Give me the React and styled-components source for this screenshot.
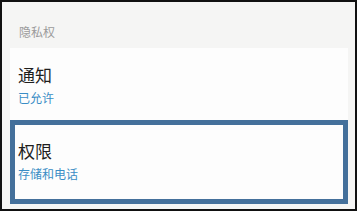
import React from "react";
import styled, { createGlobalStyle } from "styled-components";

const Global = createGlobalStyle`
  html, body { margin: 0; padding: 0; background: #ffffff; }
  * { box-sizing: border-box; }
  body { font-family: "Noto Sans CJK SC", "Noto Sans", sans-serif; }
`;

const Frame = styled.div`
  width: 357px;
  height: 211px;
  border: 2px solid #111;
  background: #f5f5f4;
  display: flex;
  flex-direction: column;
  overflow: hidden;
`;

const SectionHeader = styled.div`
  height: 46px;
  padding: 22px 0 0 17px;
  font-size: 12px;
  line-height: 16px;
  color: #9b9b9b;
`;

const Card = styled.div`
  margin: 0 7px 0 8px;
  background: #fdfdfd;
  display: flex;
  flex-direction: column;
`;

const Row = styled.div`
  height: ${(p) => p.$h}px;
  padding: ${(p) => (p.$focused ? "15px 3px 0" : "16px 8px 0")};
  border: ${(p) => (p.$focused ? "5px solid #44709b" : "none")};
  display: flex;
  flex-direction: column;
  gap: 4px;
`;

const Title = styled.div`
  font-size: 17px;
  line-height: 22px;
  color: #1e1e1e;
`;

const Sub = styled.div`
  font-size: 12px;
  line-height: 16px;
  color: #3a8dc5;
`;

export default function App() {
  return (
    <>
      <Global />
      <Frame>
        <SectionHeader>隐私权</SectionHeader>
        <Card>
          <Row $h={72}>
            <Title>通知</Title>
            <Sub>已允许</Sub>
          </Row>
          <Row $h={84} $focused>
            <Title>权限</Title>
            <Sub>存储和电话</Sub>
          </Row>
        </Card>
      </Frame>
    </>
  );
}
